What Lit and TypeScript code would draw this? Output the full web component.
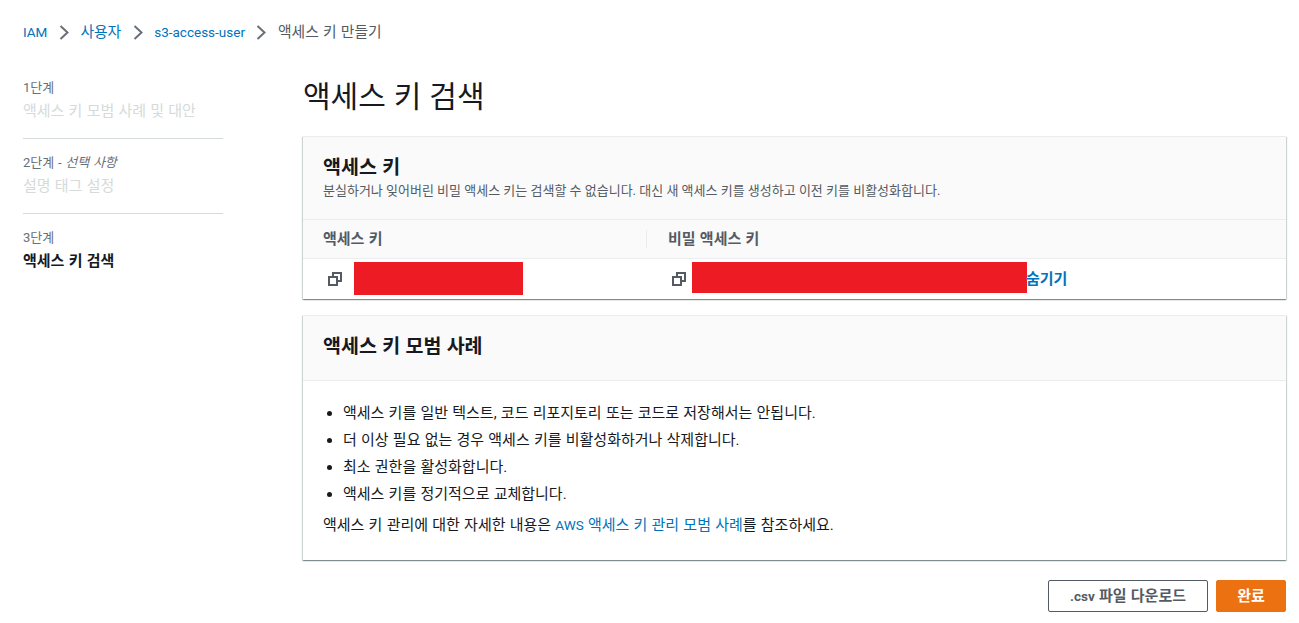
import { LitElement, html, css } from "lit";
import { customElement } from "lit/decorators.js";

const copyIcon = html`<svg class="copy" viewBox="0 0 14 14" width="14" height="14" fill="none" stroke="#545b64" stroke-width="2">
  <rect x="1" y="5" width="8" height="8"></rect>
  <path d="M5 4V1h8v8h-3"></path>
</svg>`;

const chevron = html`<svg class="chev" viewBox="0 0 10 15" width="10" height="15" fill="none" stroke="#687078" stroke-width="2">
  <path d="M1.5 1 8.5 7.5 1.5 14"></path>
</svg>`;

@customElement("app-root")
export class AppRoot extends LitElement {
  static styles = css`
    :host {
      display: block;
      height: 623px;
      overflow: hidden;
      background: #fff;
      color: #16191f;
      font: 15px/20px Roboto, "Noto Sans CJK KR", sans-serif;
      word-spacing: 0.5px;
    }
    a {
      color: #0073bb;
      text-decoration: none;
    }
    .lat {
      font-size: 13.5px;
    }
    .crumbs {
      display: flex;
      align-items: center;
      gap: 11.5px;
      height: 20px;
      padding: 22px 0 0 23px;
      color: #545b64;
      font-size: 14.8px;
    }
    .layout {
      display: flex;
      padding: 0 13px 0 23px;
    }
    .side {
      flex: 0 0 200px;
      margin-right: 80px;
      padding-top: 38px;
    }
    .step {
      height: 41px;
      padding-bottom: 17px;
      margin-bottom: 16px;
      border-bottom: 1px solid #d5dbdb;
    }
    .step:last-child {
      border-bottom: 0;
    }
    .step small {
      display: block;
      font-size: 13px;
      line-height: 16px;
      color: #687078;
      margin-bottom: 5px;
    }
    .step span {
      color: #d5dbdb;
    }
    .step.on span {
      color: #16191f;
      font-weight: 700;
    }
    .main {
      flex: 1;
      min-width: 0;
    }
    h1 {
      margin: 37px 0 21px;
      font-size: 30px;
      line-height: 36px;
      font-weight: 400;
    }
    .card {
      background: #fff;
      border-top: 1px solid #eaeded;
      box-shadow: 0 1px 1px 0 rgba(0, 28, 36, 0.3), 1px 1px 1px 0 rgba(0, 28, 36, 0.15), -1px 1px 1px 0 rgba(0, 28, 36, 0.15);
      margin-bottom: 16px;
    }
    .head {
      background: #fafafa;
      border-bottom: 1px solid #eaeded;
      padding: 20px 20px 20px;
    }
    h2 {
      margin: 0;
      font-size: 19.5px;
      line-height: 22px;
      font-weight: 700;
    }
    .head p {
      margin: 0;
      font-size: 13px;
      line-height: 16px;
      color: #545b64;
      padding-top: 4px;
      word-spacing: 0;
    }
    .keys {
      display: grid;
      grid-template-columns: 343px 1fr;
    }
    .th {
      background: #fafafa;
      border-bottom: 1px solid #eaeded;
      height: 38px;
      display: flex;
      align-items: center;
      padding-left: 20px;
      font-weight: 700;
      color: #545b64;
    }
    .th + .th {
      padding-left: 22px;
      position: relative;
    }
    .th + .th::before {
      content: "";
      position: absolute;
      left: 0;
      top: 10px;
      height: 18px;
      border-left: 1px solid #eaeded;
    }
    .td {
      display: flex;
      align-items: center;
      height: 40px;
      padding-left: 25px;
    }
    .td.secret {
      padding-left: 26px;
    }
    .copy {
      flex: none;
      margin-right: 12px;
    }
    .td.secret .copy {
      margin-right: 6px;
    }
    .redact {
      display: block;
      align-self: flex-start;
      margin-top: 3px;
      height: 33px;
      background: #ed1c24;
    }
    .td.secret .redact {
      height: 31px;
    }
    .td a {
      font-weight: 700;
      margin-left: -1px;
    }
    .card2 {
      margin-bottom: 20px;
    }
    .card2 .head {
      padding: 20px 20px 22px;
    }
    .body {
      padding: 20px 20px 23px;
    }
    ul {
      margin: 0;
      padding: 0 0 0 20px;
    }
    li {
      height: 27px;
      line-height: 24px;
    }
    .body p {
      margin: 4px 0 0;
      line-height: 24px;
    }
    .actions {
      display: flex;
      justify-content: flex-end;
      gap: 8px;
    }
    button {
      font: 700 15px/20px Roboto, "Noto Sans CJK KR", sans-serif;
      word-spacing: 0.5px;
      height: 32px;
      width: 160px;
      border-radius: 2px;
      padding: 0;
      border: 1px solid #545b64;
      background: #fff;
      color: #545b64;
    }
    button.primary {
      background: #ec7211;
      border-color: #ec7211;
      color: #fff;
      width: 70px;
    }
  `;

  render() {
    return html`
      <nav class="crumbs">
        <a class="lat">IAM</a>${chevron}<a>사용자</a>${chevron}<a class="lat">s3-access-user</a>${chevron}<span>액세스 키 만들기</span>
      </nav>
      <div class="layout">
        <aside class="side">
          <div class="step"><small>1단계</small><span>액세스 키 모범 사례 및 대안</span></div>
          <div class="step"><small>2단계 - <i>선택 사항</i></small><span>설명 태그 설정</span></div>
          <div class="step on"><small>3단계</small><span>액세스 키 검색</span></div>
        </aside>
        <main class="main">
          <h1>액세스 키 검색</h1>
          <section class="card">
            <div class="head">
              <h2>액세스 키</h2>
              <p>분실하거나 잊어버린 비밀 액세스 키는 검색할 수 없습니다. 대신 새 액세스 키를 생성하고 이전 키를 비활성화합니다.</p>
            </div>
            <div class="keys">
              <div class="th">액세스 키</div>
              <div class="th">비밀 액세스 키</div>
              <div class="td">${copyIcon}<span class="redact" style="width:169px"></span></div>
              <div class="td secret">${copyIcon}<span class="redact" style="width:335px"></span><a>숨기기</a></div>
            </div>
          </section>
          <section class="card card2">
            <div class="head"><h2>액세스 키 모범 사례</h2></div>
            <div class="body">
              <ul>
                <li>액세스 키를 일반 텍스트, 코드 리포지토리 또는 코드로 저장해서는 안됩니다.</li>
                <li>더 이상 필요 없는 경우 액세스 키를 비활성화하거나 삭제합니다.</li>
                <li>최소 권한을 활성화합니다.</li>
                <li>액세스 키를 정기적으로 교체합니다.</li>
              </ul>
              <p>액세스 키 관리에 대한 자세한 내용은 <a><span class="lat">AWS</span> 액세스 키 관리 모범 사례</a>를 참조하세요.</p>
            </div>
          </section>
          <div class="actions">
            <button><span class="lat">.csv</span> 파일 다운로드</button>
            <button class="primary">완료</button>
          </div>
        </main>
      </div>
    `;
  }
}
